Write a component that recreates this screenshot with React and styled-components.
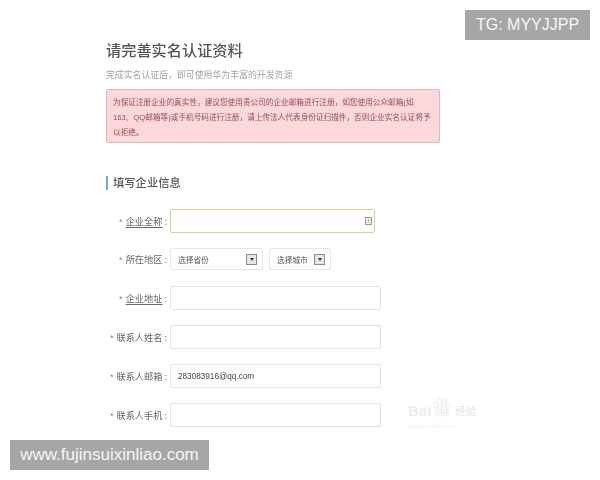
import React from 'react'
import styled, { createGlobalStyle } from 'styled-components'

const Global = createGlobalStyle`
  html, body { margin: 0; padding: 0; background: #fff; }
  body { font-family: "Liberation Sans", "Noto Sans CJK SC", sans-serif; }
`

const Page = styled.div`
  position: relative;
  width: 600px;
  height: 480px;
  overflow: hidden;
  background: #fff;
`

const Content = styled.main`
  display: flex;
  flex-direction: column;
  width: 334px;
  padding: 41px 0 0 106px;
  filter: blur(0.45px);
`

const Title = styled.h1`
  margin: 0;
  font-size: 15.2px;
  line-height: 20px;
  font-weight: 500;
  color: #555;
`

const Sub = styled.p`
  margin: 7px 0 0;
  font-size: 8.9px;
  line-height: 14px;
  color: #a2a2a2;
`

const Alert = styled.div`
  box-sizing: border-box;
  height: 54px;
  margin-top: 7px;
  padding: 5px 6px;
  border: 1px solid #e6b5b8;
  border-radius: 2px;
  background: #fbd9da;
  color: #9c4a50;
  font-size: 7.65px;
  line-height: 15px;
`

const Heading = styled.h2`
  margin: 33px 0 0;
  padding-left: 5px;
  border-left: 2px solid #6fa9cc;
  font-size: 11.3px;
  line-height: 14px;
  font-weight: 500;
  color: #555;
`

const Form = styled.form`
  display: flex;
  flex-direction: column;
  gap: 15.3px;
  margin-top: 19px;
`

const Row = styled.div`
  display: flex;
  align-items: center;
`

const Label = styled.label`
  box-sizing: border-box;
  width: 64px;
  padding-right: 3px;
  text-align: right;
  white-space: nowrap;
  font-size: 9.2px;
  color: #666;
  span { text-decoration: ${p => (p.$marked ? 'underline' : 'none')}; text-underline-offset: 2px; }
  i { font-style: normal; color: #d9606a; margin-right: 3px; }
  b { font-weight: 400; margin-left: 2px; }
`

const Field = styled.div`
  position: relative;
  box-sizing: border-box;
  display: flex;
  align-items: center;
  width: ${p => p.$width || 211}px;
  height: 24px;
  padding: 0 7px;
  border: 1px solid ${p => (p.$focus ? '#d8cd9b' : '#e2e2e2')};
  border-radius: 2px;
  background: ${p => (p.$focus ? '#fffefa' : '#fff')};
  color: #444;
  font-size: 8.2px;
`

const Hint = styled.span`
  position: absolute;
  right: 2px;
  top: 7px;
  box-sizing: border-box;
  width: 7px;
  height: 8px;
  border: 1px solid #999;
  background: #eee;
  color: #666;
  font-size: 5px;
  line-height: 6px;
  text-align: center;
`

const Selects = styled.div`
  display: flex;
  gap: 6px;
`

const Select = styled.div`
  box-sizing: border-box;
  display: flex;
  align-items: center;
  justify-content: space-between;
  width: ${p => p.$width}px;
  height: 22px;
  padding: 0 5px 0 7px;
  border: 1px solid #e6e6e6;
  border-radius: 2px;
  color: #555;
  font-size: 7.7px;
`

const Arrow = styled.span`
  box-sizing: border-box;
  display: flex;
  align-items: center;
  justify-content: center;
  width: 11px;
  height: 11px;
  border: 1px solid #8a8a8a;
  background: #e6e6e6;
  &::after {
    content: '';
    border-left: 2.5px solid transparent;
    border-right: 2.5px solid transparent;
    border-top: 3px solid #333;
  }
`

const Tag = styled.div`
  position: absolute;
  display: flex;
  align-items: center;
  justify-content: center;
  height: 30px;
  background: #a6a6a6;
  color: #f6f6f6;
`

const TopTag = styled(Tag)`
  top: 10px;
  right: 10px;
  width: 125px;
  font-size: 16px;
`

const BottomTag = styled(Tag)`
  left: 10px;
  bottom: 10px;
  width: 199px;
  font-size: 17px;
`

const Stamp = styled.div`
  position: absolute;
  left: 408px;
  top: 395px;
  width: 76px;
  height: 38px;
  color: #ececec;
  filter: blur(0.5px);
`

const Paw = styled.svg`
  position: absolute;
  left: 24px;
  top: 0;
`

const StampLine = styled.div`
  position: relative;
  display: flex;
  align-items: flex-end;
  height: 24px;
  white-space: nowrap;
  font-size: 15px;
  font-weight: 700;
  line-height: 16px;
  span { margin-left: 6px; font-size: 9px; color: #e6e6e6; }
  em { margin-left: 7px; font-style: normal; font-size: 10.5px; font-weight: 400; color: #e4e4e4; }
`

const StampUrl = styled.div`
  margin-top: 3px;
  font-size: 6px;
  line-height: 8px;
  color: #f0f0f0;
`

const rows = [
  { name: '企业全称', marked: true, focus: true, width: 205 },
  { name: '所在地区', selects: true },
  { name: '企业地址', marked: true },
  { name: '联系人姓名' },
  { name: '联系人邮箱', value: '283083916@qq.com' },
  { name: '联系人手机' },
]

export default function App() {
  return (
    <Page>
      <Global />
      <Content>
        <Title>请完善实名认证资料</Title>
        <Sub>完成实名认证后，即可使用华为丰富的开发资源</Sub>
        <Alert>
          为保证注册企业的真实性，建议您使用贵公司的企业邮箱进行注册，如您使用公众邮箱(如163、QQ邮箱等)或手机号码进行注册，请上传法人代表身份证扫描件，否则企业实名认证将予以拒绝。
        </Alert>
        <Heading>填写企业信息</Heading>
        <Form>
          {rows.map(r => (
            <Row key={r.name}>
              <Label $marked={r.marked}><i>*</i><span>{r.name}</span><b>:</b></Label>
              {r.selects ? (
                <Selects>
                  <Select $width={93}>选择省份<Arrow /></Select>
                  <Select $width={62}>选择城市<Arrow /></Select>
                </Selects>
              ) : (
                <Field $focus={r.focus} $width={r.width}>
                  {r.value}
                  {r.focus && <Hint>!</Hint>}
                </Field>
              )}
            </Row>
          ))}
        </Form>
      </Content>
      <Stamp>
        <Paw width="20" height="25" viewBox="0 0 24 25" fill="none" stroke="#e8e8e8">
          <ellipse cx="5" cy="10" rx="2.6" ry="3.2" />
          <ellipse cx="9.5" cy="4.5" rx="2.4" ry="3.2" />
          <ellipse cx="15" cy="4.5" rx="2.4" ry="3.2" />
          <ellipse cx="19.5" cy="10" rx="2.6" ry="3.2" />
          <path d="M12 10c-4 0-8 5-8 9 0 4 4 4 8 3 4 1 8 1 8-3 0-4-4-9-8-9z" />
        </Paw>
        <StampLine>
          Bai
          <span>du</span>
          <em>经验</em>
        </StampLine>
        <StampUrl>jingyan.baidu.com</StampUrl>
      </Stamp>
      <TopTag>TG: MYYJJPP</TopTag>
      <BottomTag>www.fujinsuixinliao.com</BottomTag>
    </Page>
  )
}
